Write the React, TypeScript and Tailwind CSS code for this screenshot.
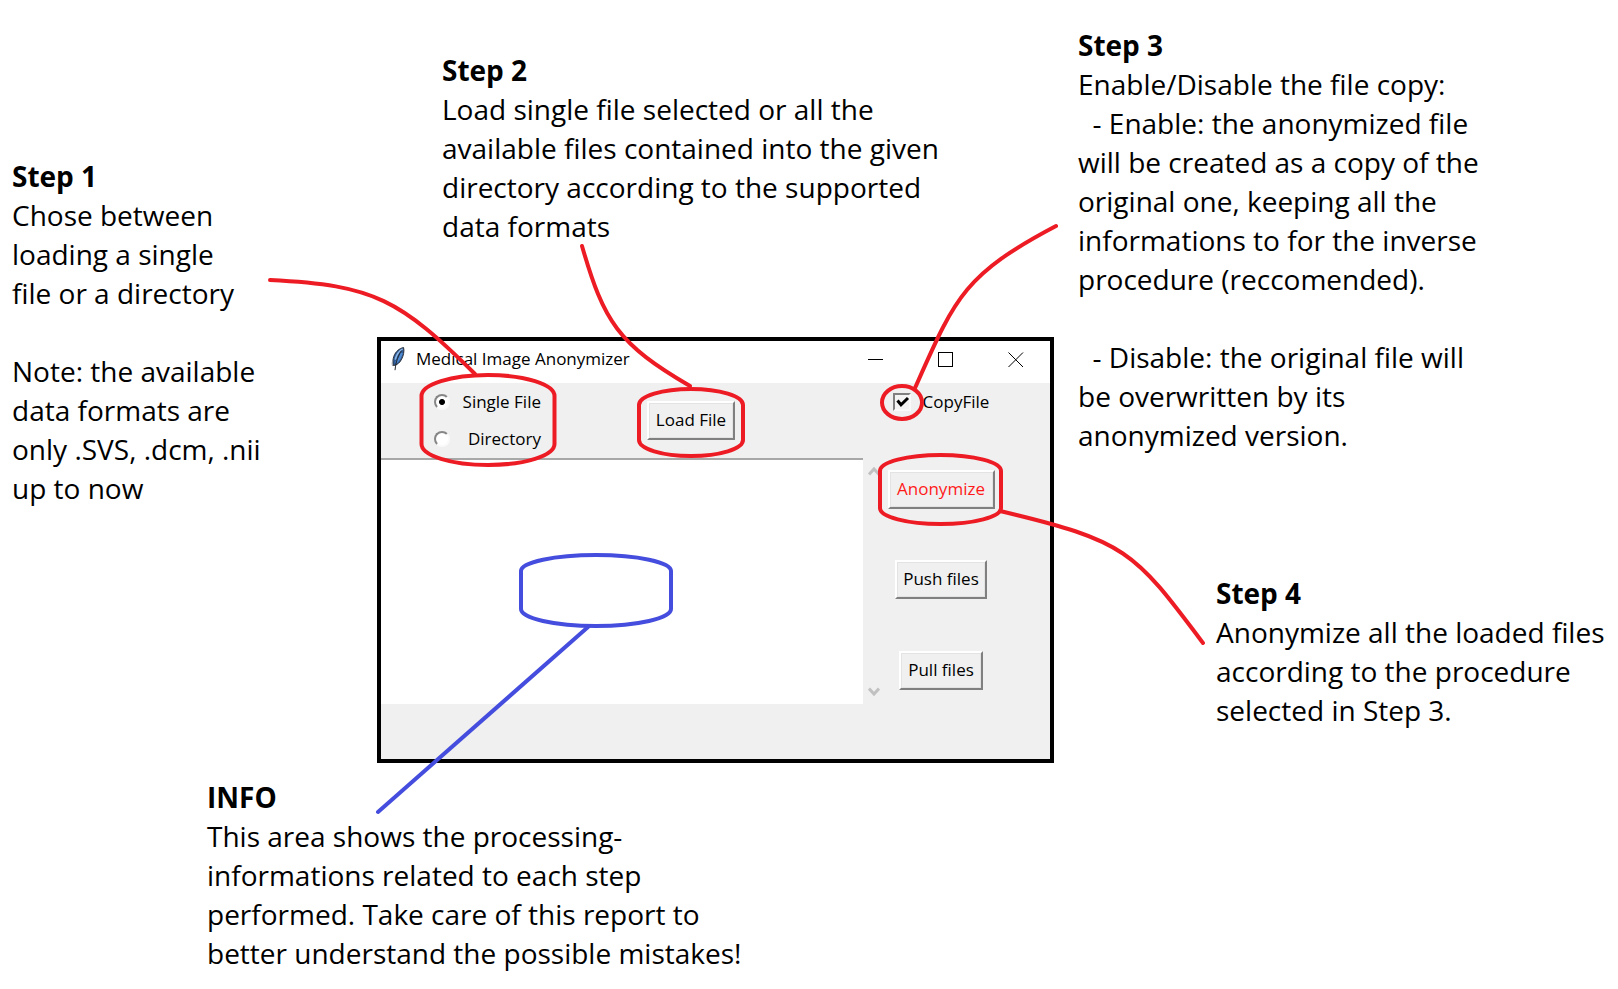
import React, { useState } from "react";

const buttonClass =
  "h-[39px] border-2 border-t-white border-l-white border-r-[#808080] border-b-[#808080] bg-[#f0f0f0] px-[6px] pb-[2px] text-[17px] leading-5 whitespace-nowrap outline-1 -outline-offset-3 outline-[#e3e3e3]";

const radioClass =
  "size-4 shrink-0 appearance-none rounded-full border-2 border-t-[#868686] border-l-[#868686] border-r-[#fafafa] border-b-[#fafafa] bg-white checked:bg-[radial-gradient(circle,#000_2.5px,#fff_3.5px)]";

function Note({ title, place, children }: { title: string; place: string; children: string }) {
  return (
    <section className={`absolute text-[28px] leading-[39px] whitespace-pre ${place}`}>
      <h2 className="font-bold">{title}</h2>
      <p>{children}</p>
    </section>
  );
}

function Feather() {
  return (
    <svg viewBox="0 0 14 24" className="h-6 w-[14px]" aria-hidden="true">
      <path d="M12.6 0.6C8.6 1.2 4.6 4.4 2.8 9.4C1.8 12.4 1.6 15.6 2.4 18.6C6 18.2 9 15.6 10.6 12.2C12.6 8.6 13.4 4 12.6 0.6Z" fill="#2f5c98" stroke="#2a2f38" strokeWidth="1" />
      <path d="M11.6 1.8C8.4 3.6 5.6 7.4 4.2 12.6" fill="none" stroke="#8fb8e8" strokeWidth="1.5" />
      <path d="M10.8 6C9.6 10 7.6 13.4 5 15.8" fill="none" stroke="#4f8ad0" strokeWidth="2.4" />
      <path d="M10.6 3.6C7.6 7.6 5 14 4 23.2" fill="none" stroke="#22262c" strokeWidth="1" />
      <path d="M1.8 13.4C1 15.4 1 17.4 1.6 19" fill="none" stroke="#9aa0a8" strokeWidth="1" />
    </svg>
  );
}

function TitleBar() {
  return (
    <header className="flex h-[42px] items-start bg-white pt-[6px] pl-[10px]">
      <Feather />
      <h1 className="ml-[11px] flex-1 text-[17px] leading-6">Medical Image Anonymizer</h1>
      <div className="flex gap-[54px] pt-[5px] pr-[26px]">
        <button type="button" aria-label="Minimize">
          <svg viewBox="0 0 16 16" className="size-4" fill="none" stroke="#000" shapeRendering="crispEdges">
            <path d="M0 7.5H15" />
          </svg>
        </button>
        <button type="button" aria-label="Maximize">
          <svg viewBox="0 0 16 16" className="size-4" fill="none" stroke="#000" shapeRendering="crispEdges">
            <path d="M0.5 0.5H14.5V14.5H0.5Z" />
          </svg>
        </button>
        <button type="button" aria-label="Close">
          <svg viewBox="0 0 16 16" className="size-4" fill="none" stroke="#000">
            <path d="M0.5 0.5L15 15M15 0.5L0.5 15" />
          </svg>
        </button>
      </div>
    </header>
  );
}

function ScrollArrow({ d, label }: { d: string; label: string }) {
  return (
    <button type="button" aria-label={label}>
      <svg viewBox="0 0 12 10" className="h-[10px] w-3" fill="none" stroke="#c1c1c1" strokeWidth="3">
        <path d={d} />
      </svg>
    </button>
  );
}

function AppWindow() {
  const [source, setSource] = useState("file");
  const [copy, setCopy] = useState(true);

  return (
    <main className="absolute top-[337px] left-[377px] w-[677px] border-4 border-black bg-[#f0f0f0]">
      <TitleBar />
      <div className="flex pb-[55px]">
        <div className="w-[482px]">
          <div className="flex h-[75px] items-start">
            <fieldset className="ml-[53px] flex w-[107px] flex-col text-[17px]">
              <label className="flex h-[37px] items-center justify-between">
                <input type="radio" name="source" className={radioClass} checked={source === "file"} onChange={() => setSource("file")} />
                Single File
              </label>
              <label className="flex h-[38px] items-center justify-between">
                <input type="radio" name="source" className={radioClass} checked={source === "directory"} onChange={() => setSource("directory")} />
                Directory
              </label>
            </fieldset>
            <button type="button" className={`mt-[18px] ml-[106px] w-[88px] ${buttonClass}`}>
              Load File
            </button>
          </div>
          <textarea
            readOnly
            aria-label="Processing report"
            className="block h-[246px] w-full resize-none border-t-2 border-[#a8a8a8] bg-white outline-none"
          />
        </div>
        <div className="mt-[83px] flex h-[231px] w-[22px] flex-col items-center justify-between">
          <ScrollArrow label="Scroll up" d="M1 8.5L6 3L11 8.5" />
          <ScrollArrow label="Scroll down" d="M1 1.5L6 7L11 1.5" />
        </div>
        <div className="flex w-[112px] flex-col items-center">
          <label className="flex h-[38px] items-center gap-3 text-[17px]">
            <span className="relative size-[18px]">
              <input
                type="checkbox"
                checked={copy}
                onChange={(e) => setCopy(e.target.checked)}
                className="peer block size-[18px] appearance-none border-2 border-t-[#808080] border-l-[#808080] border-r-[#fafafa] border-b-[#fafafa] bg-[#f4f4f4]"
              />
              <svg viewBox="0 0 18 18" className="pointer-events-none absolute inset-0 hidden size-[18px] peer-checked:block" fill="none" stroke="#000" strokeWidth="3">
                <path d="M4.5 7.500L8 11.8L15 5" />
              </svg>
            </span>
            CopyFile
          </label>
          <button type="button" className={`mt-[49px] w-[107px] text-[#ff1a1a] ${buttonClass}`}>
            Anonymize
          </button>
          <button type="button" className={`mt-[51px] w-[92px] ${buttonClass}`}>
            Push files
          </button>
          <button type="button" className={`mt-[52px] w-[84px] ${buttonClass}`}>
            Pull files
          </button>
        </div>
      </div>
    </main>
  );
}

function Callouts() {
  return (
    <svg
      viewBox="0 0 1618 989"
      className="pointer-events-none absolute top-0 left-0 h-[989px] w-[1618px]"
      fill="none"
      strokeWidth="4"
      strokeLinecap="round"
      aria-hidden="true"
    >
      <g stroke="#ed1c24">
        <path d="M270 280C375 285 400 300 475 374" />
        <path d="M421.500 396A66.500 21 0 0 1 554.500 396V444A66.500 21 0 0 1 421.500 444Z" />
        <path d="M582 246C604 322 618 344 690 386" />
        <path d="M639 405A52 16 0 0 1 743 405V440A52 16 0 0 1 639 440Z" />
        <path d="M1056 226C963 275 955 298 915 388" />
        <ellipse cx="902" cy="402.500" rx="20" ry="16.500" />
        <path d="M880 471A60.500 16 0 0 1 1001 471V508A60.500 16 0 0 1 880 508Z" />
        <path d="M1000 511C1127 541 1134 551 1203 643" />
      </g>
      <g stroke="#444ddd">
        <path d="M521 571A75 16 0 0 1 671 571V609A75 17 0 0 1 521 609Z" />
        <path d="M588 627L378 812" />
      </g>
    </svg>
  );
}

export default function App() {
  return (
    <div className="relative min-h-screen w-full overflow-hidden bg-white font-['Open_Sans','Noto_Sans',sans-serif] text-black">
      <Note title="Step 1" place="top-[157px] left-3">
        {"Chose between\nloading a single\nfile or a directory\n\nNote: the available\ndata formats are\nonly .SVS, .dcm, .nii\nup to now"}
      </Note>
      <Note title="Step 2" place="top-[51px] left-[442px]">
        {"Load single file selected or all the\navailable files contained into the given\ndirectory according to the supported\ndata formats"}
      </Note>
      <Note title="Step 3" place="top-[26px] left-[1078px]">
        {"Enable/Disable the file copy:\n  - Enable: the anonymized file\nwill be created as a copy of the\noriginal one, keeping all the\ninformations to for the inverse\nprocedure (reccomended).\n\n  - Disable: the original file will\nbe overwritten by its\nanonymized version."}
      </Note>
      <Note title="Step 4" place="top-[574px] left-[1216px]">
        {"Anonymize all the loaded files\naccording to the procedure\nselected in Step 3."}
      </Note>
      <AppWindow />
      <Note title="INFO" place="top-[778px] left-[207px]">
        {"This area shows the processing-\ninformations related to each step\nperformed. Take care of this report to\nbetter understand the possible mistakes!"}
      </Note>
      <Callouts />
    </div>
  );
}
